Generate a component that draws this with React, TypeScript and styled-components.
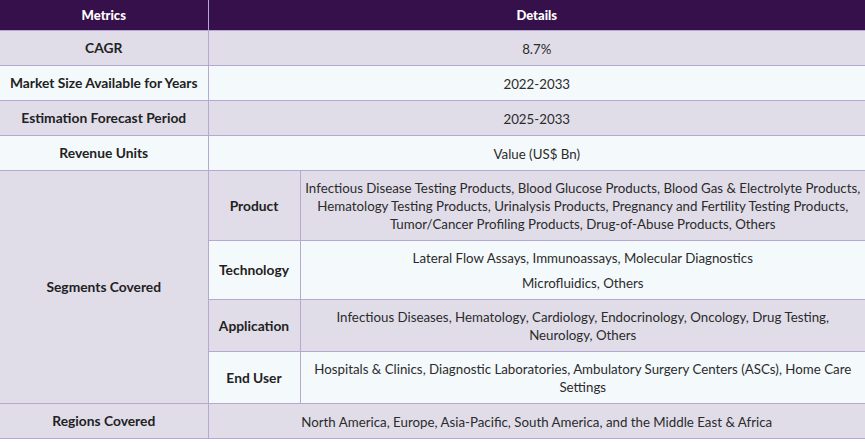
import React from 'react';
import styled, {createGlobalStyle} from 'styled-components';

const GlobalStyle = createGlobalStyle`
  body {
    margin: 0;
    background: #ffffff;
    font-family: Lato, "Liberation Sans", sans-serif;
    color: #2b2b2b;
  }
`

const Table = styled.table`
  width: 865px;
  border-collapse: collapse;
  table-layout: fixed;
  font-size: 13.3px;
  line-height: 18px;
`

const HeadCell = styled.th`
  background-color: #36104a;
  color: #ffffff;
  font-weight: 900;
  font-size: 13px;
  padding: 6px 8px;
  border: 1px solid #b5a8d3;
  border-top: none;
  &:first-child {
    border-left: none;
  }
  &:last-child {
    border-right: none;
  }
`

const Row = styled.tr<{ $shade: boolean }>`
  background-color: ${({$shade}) => ($shade ? '#e0dde9' : '#f4f9fc')};
`

const Label = styled.td<{ $shade?: boolean }>`
  font-weight: 700;
  font-size: 13.8px;
  color: #222222;
  text-align: center;
  vertical-align: middle;
  padding: 8px 6px;
  border: 1px solid #b5a8d3;
  border-left: none;
  ${({$shade}) => $shade && 'background-color: #e0dde9;'}
`

const SubLabel = styled(Label)`
  border-left: 1px solid #b5a8d3;
`

const Value = styled.td`
  text-align: center;
  vertical-align: middle;
  padding: 8px 4px 7px;
  border: 1px solid #b5a8d3;
  border-right: none;
`

const Para = styled.p`
  margin: 0;
  & + & {
    margin-top: 7px;
  }
`

type Line = { label: string; value: string }

const topRows: Line[] = [
	{label: 'CAGR', value: '8.7%'},
	{label: 'Market Size Available for Years', value: '2022-2033'},
	{label: 'Estimation Forecast Period', value: '2025-2033'},
	{label: 'Revenue Units', value: 'Value (US$ Bn)'},
]

const segments: { label: string; values: string[] }[] = [
	{
		label: 'Product',
		values: ['Infectious Disease Testing Products, Blood Glucose Products, Blood Gas & Electrolyte Products, Hematology Testing Products, Urinalysis Products, Pregnancy and Fertility Testing Products, Tumor/Cancer Profiling Products, Drug-of-Abuse Products, Others'],
	},
	{
		label: 'Technology',
		values: ['Lateral Flow Assays, Immunoassays, Molecular Diagnostics', 'Microfluidics, Others'],
	},
	{
		label: 'Application',
		values: ['Infectious Diseases, Hematology, Cardiology, Endocrinology, Oncology, Drug Testing, Neurology, Others'],
	},
	{
		label: 'End User',
		values: ['Hospitals & Clinics, Diagnostic Laboratories, Ambulatory Surgery Centers (ASCs), Home Care Settings'],
	},
]

const App = () => {
	return (
		<>
			<GlobalStyle/>
			<Table>
				<colgroup>
					<col style={{width: 208}}/>
					<col style={{width: 92}}/>
					<col/>
				</colgroup>
				<thead>
				<tr>
					<HeadCell>Metrics</HeadCell>
					<HeadCell colSpan={2}>Details</HeadCell>
				</tr>
				</thead>
				<tbody>
				{topRows.map((row, i) => (
					<Row key={row.label} $shade={i % 2 === 0}>
						<Label>{row.label}</Label>
						<Value colSpan={2}>{row.value}</Value>
					</Row>
				))}
				{segments.map((seg, i) => (
					<Row key={seg.label} $shade={i % 2 === 0}>
						{i === 0 && <Label rowSpan={segments.length} $shade>Segments Covered</Label>}
						<SubLabel>{seg.label}</SubLabel>
						<Value>
							{seg.values.map((v) => <Para key={v}>{v}</Para>)}
						</Value>
					</Row>
				))}
				<Row $shade={true}>
					<Label>Regions Covered</Label>
					<Value colSpan={2}>North America, Europe, Asia-Pacific, South America, and the Middle East &amp; Africa</Value>
				</Row>
				</tbody>
			</Table>
		</>
	);
};

export default App;
